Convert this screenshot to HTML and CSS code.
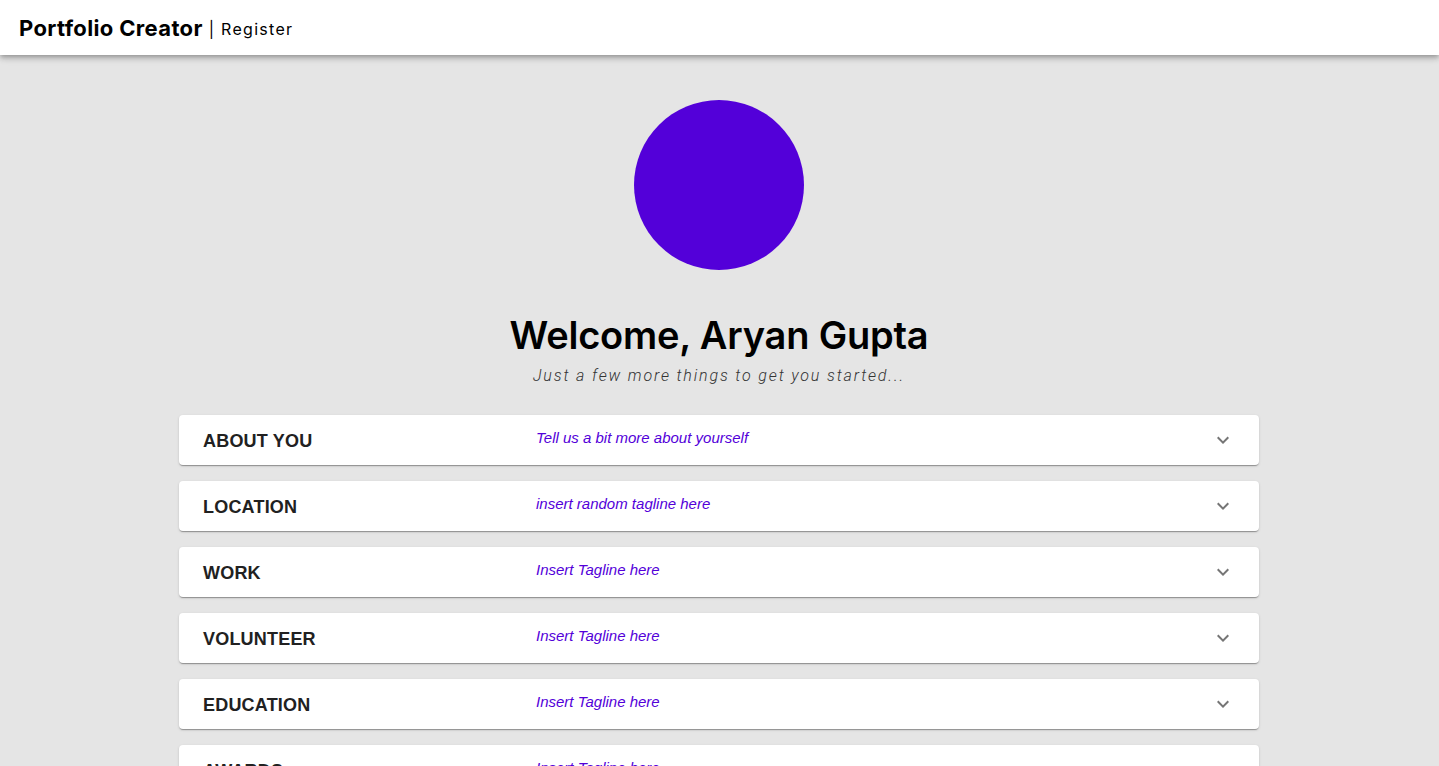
FILE: index.html
```html
<!DOCTYPE html>
<html lang="en">
<head>
<meta charset="utf-8">
<title>Portfolio Creator | Register</title>
<link rel="stylesheet" href="styles.css">
</head>
<body>
<header class="appbar">
  <span class="brand">Portfolio Creator</span>
  <span class="sep">|</span>
  <span class="page">Register</span>
</header>
<main class="main">
  <div class="avatar"></div>
  <h1 class="welcome">Welcome, Aryan Gupta</h1>
  <p class="subtitle">Just a few more things to get you started...</p>
  <section class="panels">
    <div class="panel"><span class="panel-title">ABOUT YOU</span><span class="panel-tag">Tell us a bit more about yourself</span><svg class="chev" viewBox="0 0 24 24"><path d="M16.59 8.59L12 13.17 7.41 8.59 6 10l6 6 6-6z"/></svg></div>
    <div class="panel"><span class="panel-title">LOCATION</span><span class="panel-tag">insert random tagline here</span><svg class="chev" viewBox="0 0 24 24"><path d="M16.59 8.59L12 13.17 7.41 8.59 6 10l6 6 6-6z"/></svg></div>
    <div class="panel"><span class="panel-title">WORK</span><span class="panel-tag">Insert Tagline here</span><svg class="chev" viewBox="0 0 24 24"><path d="M16.59 8.59L12 13.17 7.41 8.59 6 10l6 6 6-6z"/></svg></div>
    <div class="panel"><span class="panel-title">VOLUNTEER</span><span class="panel-tag">Insert Tagline here</span><svg class="chev" viewBox="0 0 24 24"><path d="M16.59 8.59L12 13.17 7.41 8.59 6 10l6 6 6-6z"/></svg></div>
    <div class="panel"><span class="panel-title">EDUCATION</span><span class="panel-tag">Insert Tagline here</span><svg class="chev" viewBox="0 0 24 24"><path d="M16.59 8.59L12 13.17 7.41 8.59 6 10l6 6 6-6z"/></svg></div>
    <div class="panel"><span class="panel-title">AWARDS</span><span class="panel-tag">Insert Tagline here</span><svg class="chev" viewBox="0 0 24 24"><path d="M16.59 8.59L12 13.17 7.41 8.59 6 10l6 6 6-6z"/></svg></div>
    <div class="panel"><span class="panel-title">PUBLICATIONS</span><span class="panel-tag">Insert Tagline here</span><svg class="chev" viewBox="0 0 24 24"><path d="M16.59 8.59L12 13.17 7.41 8.59 6 10l6 6 6-6z"/></svg></div>
    <div class="panel"><span class="panel-title">SKILLS</span><span class="panel-tag">Insert Tagline here</span><svg class="chev" viewBox="0 0 24 24"><path d="M16.59 8.59L12 13.17 7.41 8.59 6 10l6 6 6-6z"/></svg></div>
  </section>
</main>
</body>
</html>
```
FILE: styles.css
```css
html, body {
  margin: 0;
  padding: 0;
}
html {
  overflow: hidden;
}
body {
  background: #e5e5e5;
  font-family: "Inter", "Liberation Sans", sans-serif;
  color: #000;
}
.appbar {
  height: 55px;
  background: #fff;
  display: flex;
  align-items: center;
  padding: 0 19px;
  box-shadow: 0 2px 4px -1px rgba(0,0,0,.2), 0 4px 5px 0 rgba(0,0,0,.14), 0 1px 10px 0 rgba(0,0,0,.12);
  position: relative;
  z-index: 2;
}
.brand {
  font-size: 22px;
  font-weight: 700;
  letter-spacing: 0.35px;
}
.sep {
  font-size: 16px;
  margin: 2px 7px 0 6px;
}
.page {
  font-size: 16px;
  letter-spacing: 1.3px;
  margin-top: 2px;
}
.main {
  padding-top: 45px;
  padding-right: 1px;
  display: flex;
  flex-direction: column;
  align-items: center;
}
.avatar {
  width: 170px;
  height: 170px;
  border-radius: 50%;
  background: #5300d9;
}
.welcome {
  margin: 42px 0 0;
  font-size: 38px;
  line-height: 46px;
  font-weight: 600;
  letter-spacing: -0.2px;
}
.subtitle {
  margin: 8px 0 0;
  font-family: "Roboto", sans-serif;
  font-style: italic;
  font-weight: 300;
  font-size: 16px;
  line-height: 20px;
  letter-spacing: 1.85px;
  color: #333;
}
.panels {
  width: 1080px;
  margin-top: 29px;
  display: flex;
  flex-direction: column;
  gap: 16px;
}
.panel {
  height: 50px;
  background: #fff;
  border-radius: 4px;
  box-shadow: 0 2px 1px -1px rgba(0,0,0,.2), 0 1px 1px 0 rgba(0,0,0,.14), 0 1px 3px 0 rgba(0,0,0,.12);
  display: flex;
  align-items: center;
  padding: 0 24px;
  font-family: "Liberation Sans", Arial, sans-serif;
}
.panel-title {
  width: 333px;
  flex-shrink: 0;
  font-size: 18px;
  font-weight: 700;
  letter-spacing: 0.2px;
  color: #212121;
  margin-top: 2px;
}
.panel-tag {
  flex: 1;
  font-size: 15px;
  font-style: italic;
  color: #5300d9;
  margin-bottom: 6px;
}
.chev {
  width: 24px;
  height: 24px;
  fill: rgba(0,0,0,.54);
}
```
